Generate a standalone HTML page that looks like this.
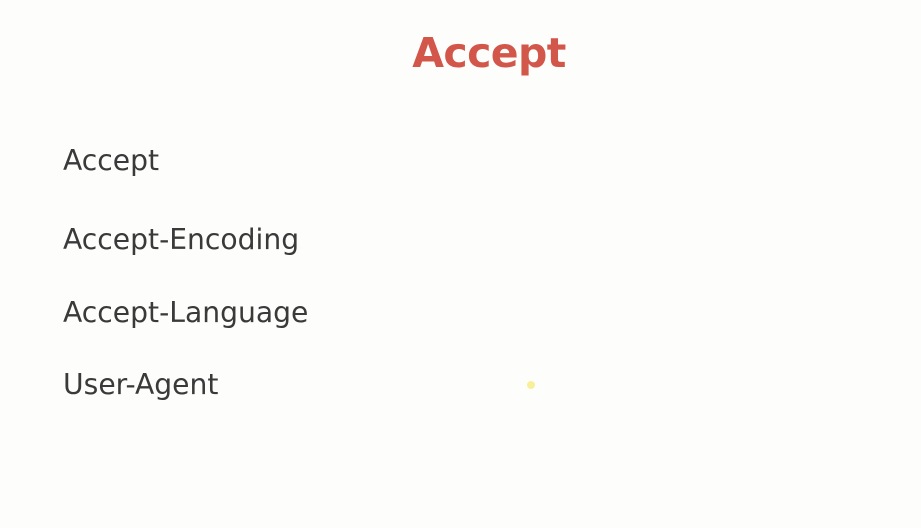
<!DOCTYPE html>
<html><head><style>
body{margin:0;width:921px;height:528px;background:#fdfdfc;position:relative;overflow:hidden;font-family:"DejaVu Sans","Liberation Sans",sans-serif}
.t{position:absolute;left:0;width:978px;text-align:center;top:29px;font-size:41px;font-weight:bold;color:#d2574a;letter-spacing:-0.6px}
.i{position:absolute;left:63px;font-size:28.2px;color:#3a3a3a;letter-spacing:0}
.d{position:absolute;left:527px;top:381px;width:8px;height:8px;border-radius:50%;background:#f8ef9a}
</style></head><body>
<div class="t">Accept</div>
<div class="i" style="top:144px">Accept</div>
<div class="i" style="top:223px">Accept-Encoding</div>
<div class="i" style="top:296px">Accept-Language</div>
<div class="i" style="top:368px">User-Agent</div>
<div class="d"></div>
</body></html>
